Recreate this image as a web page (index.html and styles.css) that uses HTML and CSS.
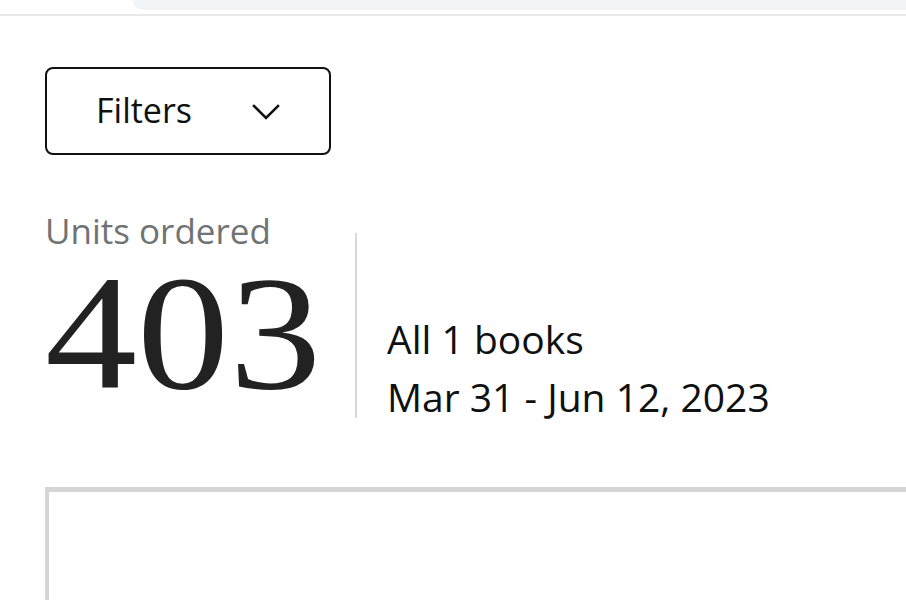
FILE: index.html
```html
<!DOCTYPE html>
<html lang="en">
<head>
<meta charset="utf-8">
<title>Units ordered</title>
<link rel="stylesheet" href="styles.css">
</head>
<body>
<div class="chrome">
  <div class="urlbar"></div>
</div>
<main class="content">
  <button class="filters" type="button">
    <span class="filters-label">Filters</span>
    <svg class="chev" width="30" height="18" viewBox="0 0 30 18" aria-hidden="true">
      <path d="M3 3 L15 15 L27 3" fill="none" stroke="#111" stroke-width="2.6" stroke-linecap="square"/>
    </svg>
  </button>
  <section class="metric">
    <div class="metric-main">
      <div class="metric-title">Units ordered</div>
      <div class="metric-value">403</div>
    </div>
    <div class="divider"></div>
    <div class="metric-meta">
      <div class="meta-line">All 1 books</div>
      <div class="meta-line">Mar 31 - Jun 12, 2023</div>
    </div>
  </section>
  <div class="panel"></div>
</main>
</body>
</html>
```

FILE: styles.css
```css
html, body {
  margin: 0;
  padding: 0;
  background: #ffffff;
  overflow: hidden;
}
body {
  font-family: "Open Sans", "Noto Sans", sans-serif;
  color: #0f1111;
}
.chrome {
  height: 14px;
  border-bottom: 2px solid #e8e8e8;
  display: flex;
}
.urlbar {
  margin-left: 133px;
  flex: 1;
  height: 10px;
  background: #f1f3f4;
  border-bottom-left-radius: 10px;
}
.content {
  padding-left: 45px;
}
.filters {
  margin-top: 51px;
  width: 286px;
  height: 88px;
  border: 2px solid #111;
  border-radius: 8px;
  background: #fff;
  display: flex;
  align-items: center;
  padding: 0 0 0 49px;
  box-sizing: border-box;
  font-family: inherit;
  cursor: pointer;
}
.filters-label {
  font-size: 34px;
  color: #0f1111;
  width: 155px;
  text-align: left;
  margin-top: -2px;
}
.chev {
  display: block;
  margin-top: 1px;
}
.metric {
  display: flex;
  margin-top: 60px;
}
.metric-main {
  width: 272px;
  display: flex;
  flex-direction: column;
}
.metric-title {
  font-size: 35px;
  line-height: 32px;
  color: #6f7373;
  white-space: nowrap;
}
.metric-value {
  font-family: "Liberation Serif", "DejaVu Serif", serif;
  font-size: 163px;
  line-height: 172px;
  color: #222;
  transform: scaleX(1.13);
  transform-origin: left center;
  white-space: nowrap;
}
.divider {
  width: 2px;
  background: #d5d9d9;
  height: 185px;
  margin-top: 18px;
  margin-left: 38px;
}
.metric-meta {
  margin-left: 30px;
  padding-top: 95px;
}
.meta-line {
  font-size: 39px;
  line-height: 58px;
  color: #0f1111;
  white-space: nowrap;
}
.panel {
  margin-top: 61px;
  height: 200px;
  border-top: 5px solid #d5d5d5;
  border-left: 4px solid #d5d5d5;
  background: #fefefe;
}
```
